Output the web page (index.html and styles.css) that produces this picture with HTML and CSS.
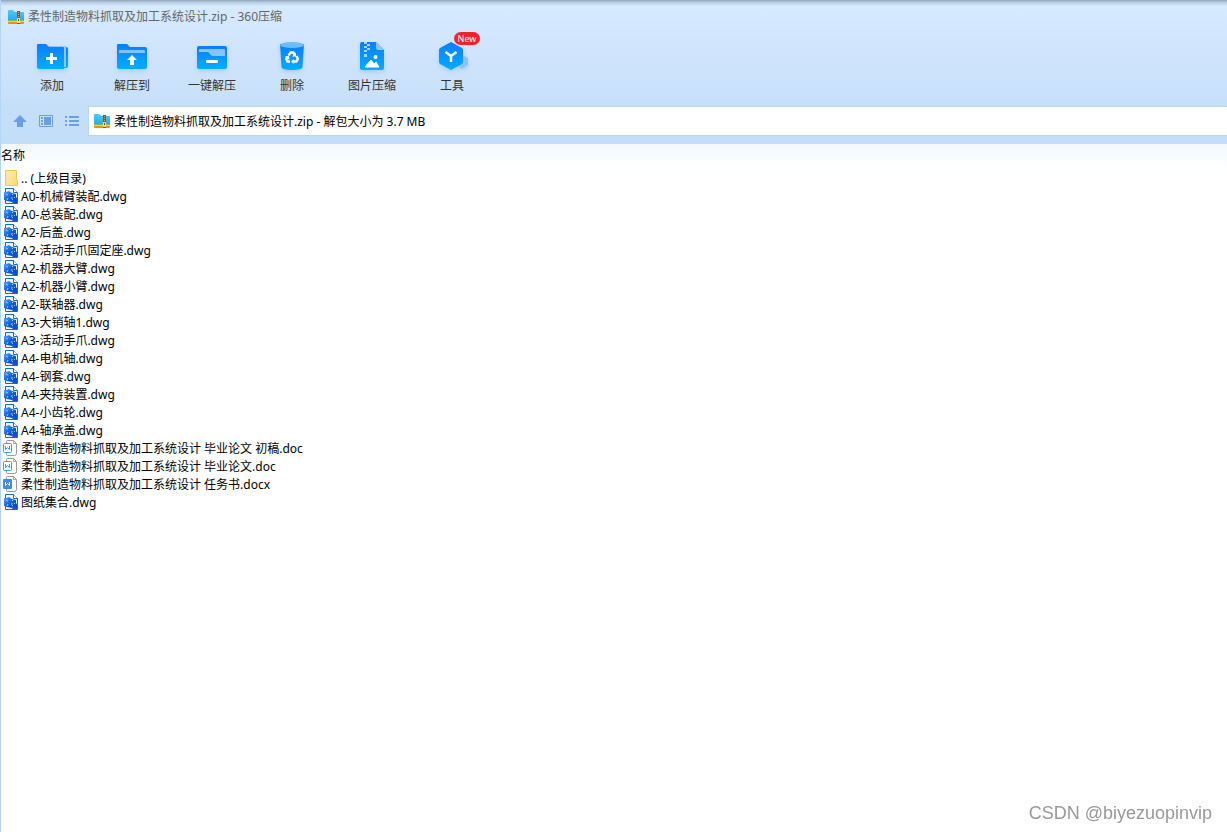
FILE: index.html
```html
<!DOCTYPE html>
<html lang="zh-CN">
<head>
<meta charset="utf-8">
<title>柔性制造物料抓取及加工系统设计.zip - 360压缩</title>
<link rel="stylesheet" href="styles.css">
</head>
<body>
<svg class="defs" aria-hidden="true">
  <defs>
    <linearGradient id="blue" x1="0" y1="0" x2="0" y2="1"><stop offset="0" stop-color="#0a7dff"/><stop offset="1" stop-color="#00aeff"/></linearGradient>
    <linearGradient id="sky" x1="0" y1="0" x2="0" y2="1"><stop offset="0" stop-color="#4fcaf8"/><stop offset="1" stop-color="#2d9af0"/></linearGradient>
    <linearGradient id="paper" x1="0" y1="0" x2="1" y2="1"><stop offset="0" stop-color="#ffecab"/><stop offset="1" stop-color="#fbd873"/></linearGradient>
    <linearGradient id="cad" x1="0" y1="0" x2="1" y2="1"><stop offset="0" stop-color="#5aa6f5"/><stop offset=".5" stop-color="#1263e0"/><stop offset="1" stop-color="#0642b4"/></linearGradient>
    <symbol id="zip" viewBox="0 0 16 14">
      <path d="M0 1q0-1 1-1h4l2 2h8q1 0 1 1v10H0z" fill="url(#sky)"/>
      <path d="M0 10h16v1H0z" fill="#5fcb54"/><path d="M0 11h16v1H0z" fill="#f5d53a"/><path d="M0 12h16v1q0 1-1 1H1q-1 0-1-1z" fill="#f28a1e"/>
      <path d="M9 1h3v13H9z" fill="#8a5426"/><path d="M10 2h1v1h-1zm0 2h1v1h-1zm0 2h1v1h-1z" fill="#d9a25c"/>
      <path d="M9 8h3v5H9z" fill="#f6d98c"/><path d="M10 9h1v2h-1z" fill="#7b4a22"/>
    </symbol>
    <symbol id="dwg" viewBox="0 0 16 16">
      <path d="M2.500.5h8l4 4v11h-12z" fill="#eef6ff" stroke="#1b66cc"/>
      <path d="M10.500.5v4h4" fill="#fff" stroke="#1b66cc"/>
      <path d="M1 4h2l3-1 3 2 4 1v7l-4 1-5-1-3-1z" fill="url(#cad)"/>
      <path d="M3 6l2 1M9 6l1 1M4 12l1-2M9 9q-1 2 1 3M11 10l1-1" fill="none" stroke="#9ed0ff"/>
      <path d="M9 15l5-6v6z" fill="#1150c4"/>
    </symbol>
    <symbol id="page" viewBox="0 0 16 16">
      <path d="M3.500 1.500q0-1 1-1h6l3 3v10q0 2-2 2h-7q-1 0-1-1z" fill="#fff" stroke="#999"/>
      <path d="M10.500.5v3h3" fill="none" stroke="#aaa"/>
    </symbol>
    <symbol id="doc" viewBox="0 0 16 16">
      <use href="#page"/><rect x=".5" y="3.500" width="8" height="9" rx="1" fill="#fff" stroke="#508ff0"/>
      <path d="M2.500 6v3.500l2-2 2 2V6" fill="none" stroke="#508ff0"/>
    </symbol>
    <symbol id="docx" viewBox="0 0 16 16">
      <use href="#page"/><rect y="3" width="9" height="10" rx="1" fill="#4287f0"/>
      <path d="M2.500 6v3.500l2-2 2 2V6" fill="none" stroke="#fff"/>
    </symbol>
  </defs>
</svg>
<header class="header">
  <h1 class="title"><svg class="zip-icon" aria-hidden="true"><use href="#zip"/></svg>柔性制造物料抓取及加工系统设计.zip - 360压缩</h1>
  <div class="toolbar">
    <button class="tool" type="button">
      <svg class="tool-icon" viewBox="0 0 32 32" aria-hidden="true"><path d="M4 6h26q2 0 2 2v17q0 2-2 2H4z" fill="url(#blue)"/><path d="M10 5h19q1 0 1 1v20h-3V6H10z" fill="#8cc7ff"/><path d="M1 4q0-1 1-1h8l3 3h14q1 0 1 1v21H3q-2 0-2-2z" fill="url(#blue)"/><path d="M15.500 12v11M10 17.500h11" stroke="#fff" stroke-width="3"/></svg>
      <span>添加</span>
    </button>
    <button class="tool" type="button">
      <svg class="tool-icon" viewBox="0 0 32 32" aria-hidden="true"><path d="M1 4q0-1 1-1h9l3 3h15q2 0 2 2v18q0 2-2 2H3q-2 0-2-2z" fill="url(#blue)"/><path d="M3 12v-2q0-1 1-1h24q1 0 1 1v2z" fill="#80c2ff"/><path d="M16 14l5 5h-3v5h-4v-5h-3z" fill="#fff"/></svg>
      <span>解压到</span>
    </button>
    <button class="tool" type="button">
      <svg class="tool-icon" viewBox="0 0 32 32" aria-hidden="true"><rect x="1" y="5" width="30" height="23" rx="2" fill="url(#blue)"/><path d="M3 9q0-1 1-1h24q1 0 1 1v6H17q-2 0-3-2-1-2-3-2H3z" fill="#86c5ff"/><rect x="10" y="19" width="12" height="3" rx="1" fill="#fff"/></svg>
      <span>一键解压</span>
    </button>
    <button class="tool" type="button">
      <svg class="tool-icon" viewBox="0 0 32 32" aria-hidden="true"><path d="M4 3h24l-1.500 23q0 3-10.500 3T5.500 26z" fill="url(#blue)"/><ellipse cx="16" cy="4" rx="12" ry="3" fill="#6dbcff"/><g fill="none" stroke="#fff" stroke-width="2.400"><path d="M12.500 14.500l2.200-3h2.600l1.600 2.500"/><path d="M20.500 15l1.300 3-1.400 2.500H17"/><path d="M14 20.500h-2.500L10.200 18l1.300-2"/></g><path d="M20 11.500v4h-4zM17.500 18v5L15 20.500zM9 15.500l4-.5.500 4z" fill="#fff"/></svg>
      <span>删除</span>
    </button>
    <button class="tool" type="button">
      <svg class="tool-icon" viewBox="0 0 32 32" aria-hidden="true"><path d="M4 3q0-2 2-2h14l8 8v18q0 2-2 2H6q-2 0-2-2z" fill="url(#blue)"/><path d="M20 1l8 8h-6q-2 0-2-2z" fill="#8ac8ff"/><path d="M8 1h3v2H8zm3 2h3v2h-3zM8 5h3v2H8zm3 2h3v2h-3zM8 9h3v2H8zm0 4h3v3H8z" fill="#a5d5ff"/><circle cx="19.500" cy="16" r="2" fill="#fff"/><path d="M9 26l6-7 3 4 2-2 3 5z" fill="#fff" stroke="#fff" stroke-linejoin="round"/></svg>
      <span>图片压缩</span>
    </button>
    <button class="tool" type="button">
      <svg class="tool-icon" viewBox="0 0 32 32" aria-hidden="true"><path d="M26 14l6 3v7l-6 4-6-4z" fill="#8ac5fa"/><path d="M15 1l11 6q1 1 1 2v12q0 1-1 2l-11 6-11-6q-1-1-1-2V9q0-1 1-2z" fill="url(#blue)"/><path d="M9.500 11l5.500 4 5.500-4M15 14.500V21" fill="none" stroke="#fff" stroke-width="2.500"/></svg>
      <span>工具</span><span class="badge">New</span>
    </button>
  </div>
  <div class="location">
    <button class="nav" type="button" aria-label="上级目录"><svg viewBox="0 0 16 16" aria-hidden="true"><path d="M8 2l7 7h-4v5H5V9H1z" fill="#699fe9"/></svg></button>
    <button class="nav" type="button" aria-label="预览"><svg viewBox="0 0 16 16" aria-hidden="true"><path d="M1.500 2.500h13v11h-13z" fill="none" stroke="#699fe9"/><path d="M6 4h7v8H6zM3 4h2v2H3zm0 3h2v2H3zm0 3h2v2H3z" fill="#699fe9"/></svg></button>
    <button class="nav" type="button" aria-label="列表"><svg viewBox="0 0 16 16" aria-hidden="true"><path d="M1 3h2v2H1zm0 4h2v2H1zm0 4h2v2H1zM5 3h10v2H5zm0 4h10v2H5zm0 4h10v2H5z" fill="#699fe9"/></svg></button>
    <label class="address"><svg class="zip-icon" aria-hidden="true"><use href="#zip"/></svg><input class="path" type="text" aria-label="路径" value="柔性制造物料抓取及加工系统设计.zip - 解包大小为 3.7 MB"></label>
  </div>
</header>
<main class="files">
  <table class="list">
    <thead><tr><th scope="col">名称</th></tr></thead>
    <tbody>
      <tr><td><div class="entry"><svg class="file-icon" viewBox="0 0 16 16" aria-hidden="true"><path d="M2 0h12v9l1 1v6H2z" fill="url(#paper)"/><path d="M2.500.5h11v9l1 1v5h-12z" fill="none" stroke="#ecc75c"/></svg>.. (上级目录)</div></td></tr>
      <tr><td><div class="entry"><svg class="file-icon" aria-hidden="true"><use href="#dwg"/></svg>A0-机械臂装配.dwg</div></td></tr>
      <tr><td><div class="entry"><svg class="file-icon" aria-hidden="true"><use href="#dwg"/></svg>A0-总装配.dwg</div></td></tr>
      <tr><td><div class="entry"><svg class="file-icon" aria-hidden="true"><use href="#dwg"/></svg>A2-后盖.dwg</div></td></tr>
      <tr><td><div class="entry"><svg class="file-icon" aria-hidden="true"><use href="#dwg"/></svg>A2-活动手爪固定座.dwg</div></td></tr>
      <tr><td><div class="entry"><svg class="file-icon" aria-hidden="true"><use href="#dwg"/></svg>A2-机器大臂.dwg</div></td></tr>
      <tr><td><div class="entry"><svg class="file-icon" aria-hidden="true"><use href="#dwg"/></svg>A2-机器小臂.dwg</div></td></tr>
      <tr><td><div class="entry"><svg class="file-icon" aria-hidden="true"><use href="#dwg"/></svg>A2-联轴器.dwg</div></td></tr>
      <tr><td><div class="entry"><svg class="file-icon" aria-hidden="true"><use href="#dwg"/></svg>A3-大销轴1.dwg</div></td></tr>
      <tr><td><div class="entry"><svg class="file-icon" aria-hidden="true"><use href="#dwg"/></svg>A3-活动手爪.dwg</div></td></tr>
      <tr><td><div class="entry"><svg class="file-icon" aria-hidden="true"><use href="#dwg"/></svg>A4-电机轴.dwg</div></td></tr>
      <tr><td><div class="entry"><svg class="file-icon" aria-hidden="true"><use href="#dwg"/></svg>A4-钢套.dwg</div></td></tr>
      <tr><td><div class="entry"><svg class="file-icon" aria-hidden="true"><use href="#dwg"/></svg>A4-夹持装置.dwg</div></td></tr>
      <tr><td><div class="entry"><svg class="file-icon" aria-hidden="true"><use href="#dwg"/></svg>A4-小齿轮.dwg</div></td></tr>
      <tr><td><div class="entry"><svg class="file-icon" aria-hidden="true"><use href="#dwg"/></svg>A4-轴承盖.dwg</div></td></tr>
      <tr><td><div class="entry"><svg class="file-icon" aria-hidden="true"><use href="#doc"/></svg>柔性制造物料抓取及加工系统设计 毕业论文 初稿.doc</div></td></tr>
      <tr><td><div class="entry"><svg class="file-icon" aria-hidden="true"><use href="#doc"/></svg>柔性制造物料抓取及加工系统设计 毕业论文.doc</div></td></tr>
      <tr><td><div class="entry"><svg class="file-icon" aria-hidden="true"><use href="#docx"/></svg>柔性制造物料抓取及加工系统设计 任务书.docx</div></td></tr>
      <tr><td><div class="entry"><svg class="file-icon" aria-hidden="true"><use href="#dwg"/></svg>图纸集合.dwg</div></td></tr>
    </tbody>
  </table>
</main>
<p class="watermark">CSDN @biyezuopinvip</p>
</body>
</html>
```
FILE: styles.css
```css
* { box-sizing: border-box; }

body {
  margin: 0;
  min-height: 100vh;
  display: flex;
  flex-direction: column;
  background: #fff;
  color: #000;
  font: 12px/18px "Noto Sans", "Noto Sans CJK SC", sans-serif;
}

button, input { font: inherit; color: inherit; border: 0; padding: 0; background: none; }
svg { display: block; flex: none; }
.defs { position: absolute; width: 0; height: 0; }

.header {
  border-left: 1px solid #b4d5f5;
  background:
    linear-gradient(#8fa4b8, #b2c8dd 2px, transparent 6px),
    linear-gradient(#d6ebff, #cfe4fc 60px, #c6dff8 106px, #c3def9);
}

.title {
  display: flex;
  align-items: center;
  gap: 4px;
  margin: 0;
  padding: 8px 7px 6px;
  color: #666;
  font-size: 12px;
  font-weight: 400;
}

.zip-icon { width: 16px; height: 14px; }

.toolbar { display: flex; padding: 0 11px; }

.tool {
  position: relative;
  width: 80px;
  height: 74px;
  padding-top: 9px;
  display: flex;
  flex-direction: column;
  align-items: center;
  justify-content: flex-start;
  gap: 4px;
  color: #333;
}

.tool-icon { width: 32px; height: 32px; filter: drop-shadow(0 2px 2px #a9cdf2); }

.badge {
  position: absolute;
  top: 0;
  left: 42px;
  width: 26px;
  height: 13px;
  border-radius: 7px;
  background: #f5222d;
  color: #fff;
  font-size: 9px;
  line-height: 13px;
  text-align: center;
}

.location { display: flex; align-items: center; padding: 0 0 8px 6px; }
.nav { width: 26px; height: 26px; display: grid; place-items: center; }
.nav svg { width: 16px; height: 16px; }

.address {
  flex: 1;
  display: flex;
  align-items: center;
  gap: 4px;
  height: 30px;
  margin-left: 3px;
  padding-left: 5px;
  border: 1px solid #b8d5f3;
  border-right: 0;
  background: #fff;
}

.path { flex: 1; min-width: 0; height: 28px; outline: 0; }

.files { flex: 1; border-left: 1px solid #b4d5f5; }
.list { width: 100%; border-collapse: collapse; }

.list th {
  height: 26px;
  padding: 0 0 3px;
  background: linear-gradient(#f3f9ff, #fff);
  font-weight: 400;
  text-align: left;
}

.list td { padding: 0; }
.entry { display: flex; align-items: flex-start; gap: 2px; padding-left: 2px; }
.file-icon { width: 16px; height: 16px; }

.watermark {
  position: fixed;
  right: 15px;
  bottom: 7px;
  margin: 0;
  color: #999;
  font: 18px/24px "Liberation Sans", sans-serif;
}
```
